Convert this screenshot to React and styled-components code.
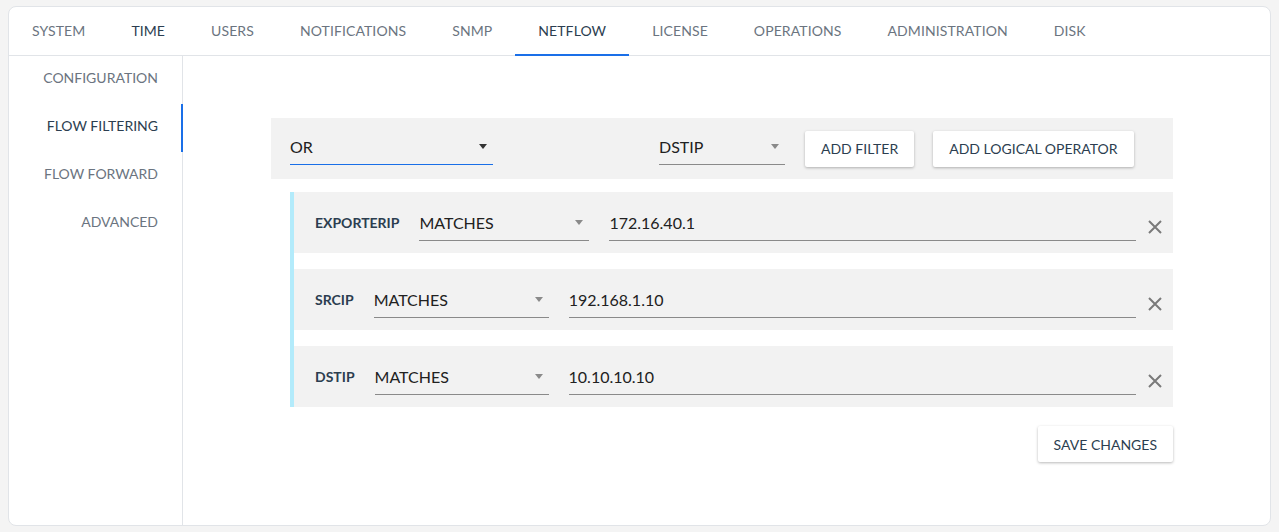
import React from 'react';
import styled, { createGlobalStyle } from 'styled-components';

const GlobalStyle = createGlobalStyle`
  html, body {
    margin: 0;
    padding: 0;
    background: #f4f4f4;
    font-family: Lato, "Open Sans", "Liberation Sans", sans-serif;
  }
`;

const Page = styled.div`
  padding: 6px 8px;
  height: 532px;
  box-sizing: border-box;
`;

const Card = styled.div`
  background: #fff;
  border: 1px solid #e1e4e8;
  border-radius: 8px;
  height: 520px;
  box-sizing: border-box;
  display: flex;
  flex-direction: column;
  overflow: hidden;
`;

const TabBar = styled.div`
  display: flex;
  height: 48px;
  border-bottom: 1px solid #e1e4e8;
  flex-shrink: 0;
`;

const Tab = styled.div`
  padding: 0 23px 1px;
  display: flex;
  align-items: center;
  font-size: 14px;
  letter-spacing: 0.1px;
  color: ${(p) => (p.active || p.dark ? '#2c3e50' : '#6b7480')};
  border-bottom: 2px solid ${(p) => (p.active ? '#1a6fe8' : 'transparent')};
  margin-bottom: -1px;
`;

const Body = styled.div`
  display: flex;
  flex: 1;
`;

const Sidebar = styled.div`
  width: 173px;
  border-right: 1px solid #e1e4e8;
  flex-shrink: 0;
`;

const SideItem = styled.div`
  height: 48px;
  display: flex;
  align-items: center;
  justify-content: flex-end;
  padding-right: 23px;
  padding-bottom: 5px;
  box-sizing: border-box;
  font-size: 14px;
  color: ${(p) => (p.active ? '#2c3e50' : '#6b7480')};
  border-right: 2px solid ${(p) => (p.active ? '#1a6fe8' : 'transparent')};
  margin-right: -1px;
`;

const Main = styled.div`
  flex: 1;
  padding: 62px 0 0 88px;
`;

const Content = styled.div`
  width: 902px;
`;

const Toolbar = styled.div`
  background: #f2f2f2;
  height: 61px;
  display: flex;
  align-items: center;
  padding: 0 19px;
`;

const SelectWrap = styled.div`
  width: ${(p) => p.width}px;
  height: 33px;
  display: flex;
  align-items: center;
  justify-content: space-between;
  border-bottom: 1px solid ${(p) => (p.focused ? '#1a6fe8' : '#8a8a8a')};
  font-size: 16px;
  color: #212121;
  box-sizing: border-box;
  padding-right: 6px;
  padding-bottom: 4px;
  margin-left: ${(p) => p.ml || 0}px;
  flex-shrink: 0;
`;

const Arrow = styled.span`
  width: 0;
  height: 0;
  border-left: 4.5px solid transparent;
  border-right: 4.5px solid transparent;
  border-top: 5px solid ${(p) => (p.dark ? '#333' : '#8a8a8a')};
`;

const Button = styled.button`
  height: 36px;
  padding: 0 16px;
  background: #fff;
  border: none;
  border-radius: 2px;
  box-shadow: 0 1px 3px rgba(0, 0, 0, 0.28);
  font-family: inherit;
  font-size: 14px;
  color: #2c3e50;
  margin-left: ${(p) => p.ml || 0}px;
  cursor: pointer;
`;

const Filters = styled.div`
  margin: 13px 0 0 19px;
  border-left: 4px solid #b3ebfb;
  display: flex;
  flex-direction: column;
  gap: 16px;
`;

const FilterRow = styled.div`
  background: #f2f2f2;
  height: 61px;
  display: flex;
  align-items: center;
  padding: 0 11px 0 21px;
`;

const FieldLabel = styled.div`
  font-size: 14px;
  font-weight: 700;
  color: #2c3e50;
  margin-right: 20px;
  padding-bottom: 1px;
`;

const RowSelect = styled(SelectWrap)`
  margin-top: 4px;
`;

const ValueInput = styled.div`
  flex: 1;
  height: 33px;
  box-sizing: border-box;
  padding-bottom: 4px;
  margin: 4px 0 0 20px;
  display: flex;
  align-items: center;
  border-bottom: 1px solid #8a8a8a;
  font-size: 16px;
  color: #212121;
`;

const Remove = styled.div`
  margin-left: 12px;
  display: flex;
  padding-top: 8px;
`;

const Footer = styled.div`
  display: flex;
  justify-content: flex-end;
  margin-top: 19px;
`;

const tabs = [
  'SYSTEM',
  'TIME',
  'USERS',
  'NOTIFICATIONS',
  'SNMP',
  'NETFLOW',
  'LICENSE',
  'OPERATIONS',
  'ADMINISTRATION',
  'DISK',
];

const sideItems = ['CONFIGURATION', 'FLOW FILTERING', 'FLOW FORWARD', 'ADVANCED'];

const filters = [
  { field: 'EXPORTERIP', op: 'MATCHES', value: '172.16.40.1', selWidth: 170 },
  { field: 'SRCIP', op: 'MATCHES', value: '192.168.1.10', selWidth: 175 },
  { field: 'DSTIP', op: 'MATCHES', value: '10.10.10.10', selWidth: 174 },
];

const CloseIcon = () => (
  <svg width="14" height="14" viewBox="0 0 14 14">
    <path d="M1 1L13 13M13 1L1 13" stroke="#7a7a7a" strokeWidth="2" />
  </svg>
);

const App = () => (
  <Page>
    <GlobalStyle />
    <Card>
      <TabBar>
        {tabs.map((t) => (
          <Tab key={t} active={t === 'NETFLOW'} dark={t === 'TIME'}>
            {t}
          </Tab>
        ))}
      </TabBar>
      <Body>
        <Sidebar>
          {sideItems.map((s) => (
            <SideItem key={s} active={s === 'FLOW FILTERING'}>
              {s}
            </SideItem>
          ))}
        </Sidebar>
        <Main>
          <Content>
            <Toolbar>
              <SelectWrap width={203} focused>
                OR
                <Arrow dark />
              </SelectWrap>
              <SelectWrap width={126} ml={166}>
                DSTIP
                <Arrow />
              </SelectWrap>
              <Button ml={20}>ADD FILTER</Button>
              <Button ml={19}>ADD LOGICAL OPERATOR</Button>
            </Toolbar>
            <Filters>
              {filters.map((f) => (
                <FilterRow key={f.field}>
                  <FieldLabel>{f.field}</FieldLabel>
                  <RowSelect width={f.selWidth}>
                    {f.op}
                    <Arrow />
                  </RowSelect>
                  <ValueInput>{f.value}</ValueInput>
                  <Remove>
                    <CloseIcon />
                  </Remove>
                </FilterRow>
              ))}
            </Filters>
            <Footer>
              <Button>SAVE CHANGES</Button>
            </Footer>
          </Content>
        </Main>
      </Body>
    </Card>
  </Page>
);

export default App;
